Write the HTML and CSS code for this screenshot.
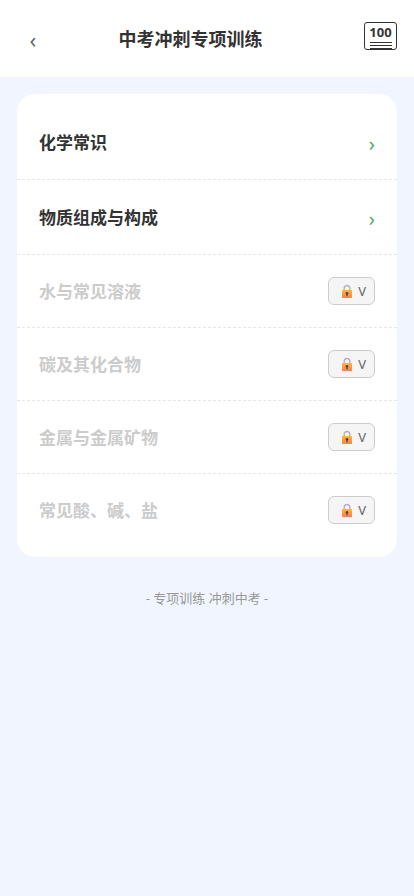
FILE: index.html
```
<!DOCTYPE html>
<html lang="zh-CN">
<head>
<meta charset="utf-8">
<meta name="viewport" content="width=device-width, initial-scale=1">
<title>中考冲刺专项训练</title>
<link rel="stylesheet" href="styles.css">
</head>
<body>
<svg class="defs" aria-hidden="true">
  <defs>
    <linearGradient id="lock-body" x1="0" y1="0" x2="0" y2="1">
      <stop offset="0" stop-color="#fdb734"/>
      <stop offset="1" stop-color="#f9804e"/>
    </linearGradient>
    <symbol id="lock" viewBox="0 0 12 16">
      <path d="M3.2 8V5.3a2.8 2.8 0 0 1 5.6 0V8" fill="none" stroke="#b5b0bd" stroke-width="1.4"/>
      <rect x="1" y="7" width="10" height="8" rx="0.4" fill="url(#lock-body)"/>
      <circle cx="6" cy="10.2" r="1.3" fill="#5b3a4c"/>
      <path d="M5.5 10.5h1l.2 2.8H5.3z" fill="#5b3a4c"/>
    </symbol>
  </defs>
</svg>
<header class="header">
  <button class="back" type="button" aria-label="返回">‹</button>
  <h1 class="title">中考冲刺专项训练</h1>
  <button class="score" type="button">
    <span class="score-value">100</span>
    <span class="score-lines"></span>
  </button>
</header>
<main>
  <ul class="card">
    <li class="row"><a class="topic" href="#chemistry"><span class="name">化学常识</span><span class="arrow">›</span></a></li>
    <li class="row"><a class="topic" href="#matter"><span class="name">物质组成与构成</span><span class="arrow">›</span></a></li>
    <li class="row locked"><span class="name">水与常见溶液</span><button class="unlock" type="button"><svg class="lock"><use href="#lock"/></svg>V</button></li>
    <li class="row locked"><span class="name">碳及其化合物</span><button class="unlock" type="button"><svg class="lock"><use href="#lock"/></svg>V</button></li>
    <li class="row locked"><span class="name">金属与金属矿物</span><button class="unlock" type="button"><svg class="lock"><use href="#lock"/></svg>V</button></li>
    <li class="row locked"><span class="name">常见酸、碱、盐</span><button class="unlock" type="button"><svg class="lock"><use href="#lock"/></svg>V</button></li>
  </ul>
</main>
<footer class="footer">- 专项训练 冲刺中考 -</footer>
</body>
</html>
```
FILE: styles.css
```
* {
  box-sizing: border-box;
}

body {
  margin: 0;
  min-height: 100vh;
  background: #f0f5ff;
  color: #333;
  font-family: "Noto Sans", "Noto Sans CJK SC", sans-serif;
}

button {
  margin: 0;
  font-family: inherit;
  cursor: pointer;
}

.defs {
  display: block;
  width: 0;
  height: 0;
}

.header {
  display: flex;
  align-items: center;
  padding: 20px 17px 25px;
  background: #fff;
}

.back {
  width: 32px;
  height: 32px;
  padding: 6px 0 0;
  border: 0;
  background: none;
  color: #666;
  font-size: 22px;
  line-height: 26px;
}

.title {
  flex: 1;
  margin: 0;
  padding: 6px 32px 0 0;
  font-size: 18px;
  line-height: 26px;
  text-align: center;
}

.score {
  display: flex;
  flex-direction: column;
  align-items: center;
  width: 33px;
  height: 28px;
  padding: 1px 0 0;
  border: 1px solid #333;
  border-radius: 3px;
  background: #fff;
  color: #333;
}

.score-value {
  font-size: 13px;
  font-weight: 700;
  line-height: 16px;
}

.score-lines {
  width: 22px;
  height: 7px;
  margin-top: 2px;
  background: repeating-linear-gradient(#333 0 1px, transparent 1px 3px);
}

.card {
  margin: 17px 17px 0;
  padding: 11px 0;
  border-radius: 18px;
  background: #fff;
  list-style: none;
}

.row {
  border-bottom: 1px dashed #e5e5e5;
}

.row:last-child {
  border-bottom: 0;
}

.topic,
.locked {
  display: flex;
  align-items: center;
  justify-content: space-between;
  padding: 22px;
}

.topic {
  color: #333;
  text-decoration: none;
}

.name {
  padding-top: 2px;
  font-size: 17px;
  font-weight: 700;
  line-height: 26px;
}

.arrow {
  padding-top: 4px;
  color: #4caf50;
  font-size: 20px;
  line-height: 26px;
}

.locked {
  color: #ccc;
}

.unlock {
  display: flex;
  align-items: center;
  gap: 5px;
  height: 28px;
  padding: 0 8px 0 12px;
  border: 1px solid #ccc;
  border-radius: 6px;
  background: #f5f5f5;
  color: #666;
  font-size: 13px;
}

.lock {
  width: 12px;
  height: 16px;
}

.footer {
  padding: 31px 17px;
  color: #999;
  font-size: 13px;
  line-height: 20px;
  text-align: center;
}
```
